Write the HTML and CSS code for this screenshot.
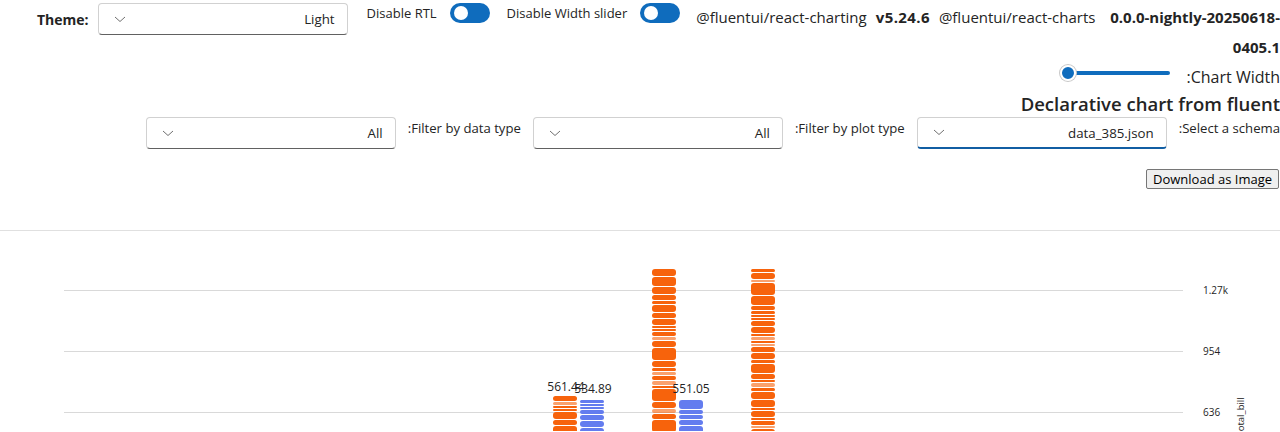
FILE: index.html
```html
<!DOCTYPE html>
<html lang="en">
<head>
<meta charset="utf-8">
<title>Declarative chart</title>
<link rel="stylesheet" href="styles.css">
</head>
<body>
<div class="top-row">
  <div class="theme">
    <label class="theme-label">Theme:</label>
    <button class="dropdown" dir="rtl"><span class="dd-value">Light</span><svg class="chev" width="12" height="7" viewBox="0 0 12 7"><path d="M1 1l5 4.5L11 1" fill="none" stroke="#707070" stroke-width="1"/></svg></button>
  </div>
  <div class="toggle-field"><span>Disable RTL</span><span class="switch"><span class="knob"></span></span></div>
  <div class="toggle-field"><span>Disable Width slider</span><span class="switch"><span class="knob"></span></span></div>
  <div class="versions">
    <span class="pkg">@fluentui/react-charting</span>
    <span class="ver v1">v5.24.6</span>
    <span class="pkg">@fluentui/react-charts</span>
    <span class="ver nightly">0.0.0-nightly-20250618-<br>0405.1</span>
  </div>
</div>

<div class="rtl-area" dir="rtl">
  <div class="width-row">
    <label class="width-label">Chart Width:</label>
    <div class="slider"><span class="track"></span><span class="thumb"></span></div>
  </div>
  <h1 class="title">Declarative chart from fluent</h1>
  <div class="filters">
    <label class="f-label">Select a schema:</label>
    <button class="dropdown focused"><span class="dd-value">data_385.json</span><svg class="chev" width="12" height="7" viewBox="0 0 12 7"><path d="M1 1l5 4.5L11 1" fill="none" stroke="#707070" stroke-width="1"/></svg></button>
    <label class="f-label">Filter by plot type:</label>
    <button class="dropdown"><span class="dd-value">All</span><svg class="chev" width="12" height="7" viewBox="0 0 12 7"><path d="M1 1l5 4.5L11 1" fill="none" stroke="#707070" stroke-width="1"/></svg></button>
    <label class="f-label">Filter by data type:</label>
    <button class="dropdown"><span class="dd-value">All</span><svg class="chev" width="12" height="7" viewBox="0 0 12 7"><path d="M1 1l5 4.5L11 1" fill="none" stroke="#707070" stroke-width="1"/></svg></button>
  </div>
  <div class="download-row"><button class="download">Download as Image</button></div>
</div>

<div class="divider"></div>

<div class="chart-wrap">
  <svg id="chart" class="chart" width="1280" height="201" viewBox="0 0 1280 201">
    <g class="grid">
      <line x1="64" x2="1183" y1="60.5" y2="60.5"/>
      <line x1="64" x2="1183" y1="121.5" y2="121.5"/>
      <line x1="64" x2="1183" y1="182.5" y2="182.5"/>
    </g>
    <g class="ylabels">
      <text x="1203" y="64">1.27k</text>
      <text x="1203" y="125">954</text>
      <text x="1203" y="186">636</text>
    </g>
    <text class="axis-title" x="1244" y="186" transform="rotate(-90 1244 186)">total_bill</text>
    <g id="bars"></g>
    <g class="bar-labels">
      <text x="566" y="161">561.44</text>
      <text x="593" y="163">534.89</text>
      <text x="691" y="163">551.05</text>
    </g>
  </svg>
</div>
<script src="script.js"></script>
</body>
</html>
```

FILE: styles.css
```css
body {
  margin: 0;
  font-family: "Segoe UI", "Open Sans", "Noto Sans", sans-serif;
  font-size: 13px;
  color: #242424;
  background: #fff;
  overflow: hidden;
}

.top-row {
  display: flex;
  align-items: flex-start;
  padding: 3px 0 0 37px;
}

.theme {
  display: flex;
  align-items: center;
  gap: 8px;
}

.theme-label {
  font-weight: 700;
  font-size: 14px;
}

.dropdown {
  width: 250px;
  height: 32px;
  box-sizing: border-box;
  border: 1px solid #d1d1d1;
  border-bottom-color: #616161;
  border-radius: 4px;
  background: #fff;
  display: flex;
  align-items: center;
  justify-content: space-between;
  padding: 0 12px 0 15px;
  font: inherit;
  color: #242424;
  font-size: 13.3px;
}

.theme .dropdown {
  margin-left: 1px;
}

.dropdown.focused {
  border-bottom: 2px solid #115ea3;
}

.chev {
  flex: none;
}

.toggle-field {
  display: flex;
  align-items: center;
  gap: 13px;
  height: 20px;
  margin-left: 19px;
}

.toggle-field + .toggle-field {
  margin-left: 17px;
}

.switch {
  position: relative;
  width: 40px;
  height: 20px;
  border-radius: 10px;
  background: #0f6cbd;
}

.knob {
  position: absolute;
  left: 4px;
  top: 3px;
  width: 14px;
  height: 14px;
  border-radius: 50%;
  background: #fff;
}

.versions {
  flex: 1;
  display: flex;
  gap: 9px;
  margin-left: 16px;
  margin-top: -1px;
  font-size: 15px;
  line-height: 30px;
  white-space: nowrap;
}

.ver {
  font-weight: 700;
}

.v1 {
  letter-spacing: 0.4px;
}

.nightly {
  flex: 1;
  text-align: right;
}

.rtl-area {
  display: flex;
  flex-direction: column;
}

.width-row {
  display: flex;
  align-items: flex-start;
  gap: 17px;
  margin-top: 1px;
  height: 20px;
}

.width-label {
  font-size: 16px;
  line-height: 20px;
  margin-top: 4px;
}

.slider {
  position: relative;
  width: 110px;
  height: 20px;
}

.track {
  position: absolute;
  left: 0;
  right: 0;
  top: 8px;
  height: 4px;
  border-radius: 2px;
  background: #0f6cbd;
}

.thumb {
  position: absolute;
  left: 0;
  top: 2px;
  width: 12px;
  height: 12px;
  border-radius: 50%;
  background: #0f6cbd;
  border: 2px solid #fff;
  box-shadow: 0 0 0 1px #c8c8c8;
}

.title {
  margin: 8px 0 0;
  font-size: 18.5px;
  font-weight: 600;
  line-height: 26px;
}

.filters {
  display: flex;
  align-items: flex-start;
  gap: 12px;
}

.f-label {
  font-size: 13.15px;
  line-height: 20px;
  margin-top: 1px;
}

.download-row {
  display: flex;
  margin-top: 20px;
  padding-right: 1px;
}

.download {
  height: 20px;
  box-sizing: border-box;
  padding: 0 6px;
  border: 1px solid #767676;
  border-radius: 2px;
  background: #efefef;
  font: inherit;
  font-size: 13px;
  line-height: 17px;
  color: #000;
}

.divider {
  margin-top: 41px;
  border-top: 1px solid #e0e0e0;
}

.chart-wrap {
  margin-top: -1px;
}

.chart {
  display: block;
  overflow: visible;
}

.grid line {
  stroke: #d9d9d9;
  stroke-width: 1;
}

.ylabels text {
  font-size: 10px;
  fill: #242424;
}

.axis-title {
  font-size: 9.5px;
  fill: #242424;
  text-anchor: middle;
}

.bar-labels text {
  font-size: 12px;
  fill: #242424;
  text-anchor: middle;
}
```

FILE: script.js
```js
(function () {
  var ns = "http://www.w3.org/2000/svg";
  var g = document.getElementById("bars");
  var seed = 11;
  function rnd() {
    seed = (seed * 9301 + 49297) % 233280;
    return seed / 233280;
  }
  var heights = [2, 2, 2, 3, 3, 4, 4, 5, 6, 7, 9, 12];
  var bars = [
    { x: 553, top: 166, color: "#f7630c" },
    { x: 580, top: 170, color: "#637cef" },
    { x: 652, top: 39, color: "#f7630c" },
    { x: 679, top: 170, color: "#637cef" },
    { x: 751, top: 39, color: "#f7630c" }
  ];
  bars.forEach(function (b) {
    var y = b.top;
    while (y < 215) {
      var h = heights[Math.floor(rnd() * heights.length)];
      var light = rnd() < 0.2 && h <= 4;
      var r = document.createElementNS(ns, "rect");
      r.setAttribute("x", b.x);
      r.setAttribute("y", y);
      r.setAttribute("width", 24);
      r.setAttribute("height", h);
      r.setAttribute("rx", Math.min(3, h / 2));
      r.setAttribute("fill", b.color);
      r.setAttribute("fill-opacity", light ? 0.6 : 1);
      g.appendChild(r);
      y += h + 1;
    }
  });
})();
```
